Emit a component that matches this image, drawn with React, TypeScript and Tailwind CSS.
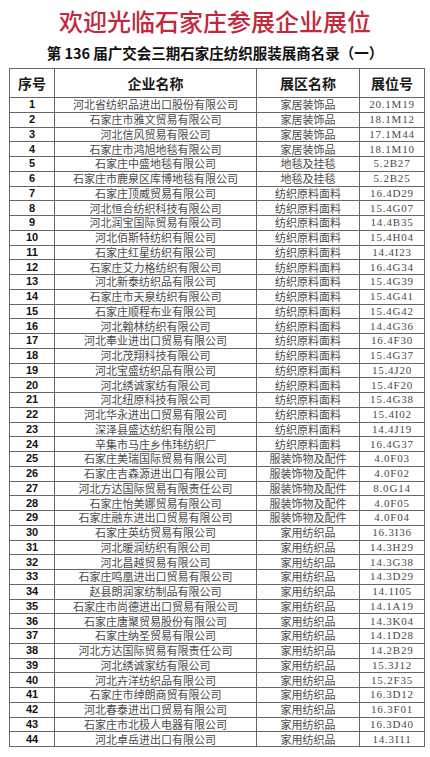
import React from "react";

interface Exhibitor {
  name: string;
  hall: string;
  booth: string;
}

const rows: Exhibitor[] = [
  { name: "河北省纺织品进出口股份有限公司", hall: "家居装饰品", booth: "20.1M19" },
  { name: "石家庄市雅文贸易有限公司", hall: "家居装饰品", booth: "18.1M12" },
  { name: "河北信风贸易有限公司", hall: "家居装饰品", booth: "17.1M44" },
  { name: "石家庄市鸿旭地毯有限公司", hall: "家居装饰品", booth: "18.1M10" },
  { name: "石家庄中盛地毯有限公司", hall: "地毯及挂毯", booth: "5.2B27" },
  { name: "石家庄市鹿泉区库博地毯有限公司", hall: "地毯及挂毯", booth: "5.2B25" },
  { name: "石家庄顶威贸易有限公司", hall: "纺织原料面料", booth: "16.4D29" },
  { name: "河北恒合纺织科技有限公司", hall: "纺织原料面料", booth: "15.4G07" },
  { name: "河北润宝国际贸易有限公司", hall: "纺织原料面料", booth: "14.4B35" },
  { name: "河北佰斯特纺织有限公司", hall: "纺织原料面料", booth: "15.4H04" },
  { name: "石家庄红星纺织有限公司", hall: "纺织原料面料", booth: "14.4I23" },
  { name: "石家庄艾力格纺织有限公司", hall: "纺织原料面料", booth: "16.4G34" },
  { name: "河北新泰纺织品有限公司", hall: "纺织原料面料", booth: "15.4G39" },
  { name: "石家庄市天泉纺织有限公司", hall: "纺织原料面料", booth: "15.4G41" },
  { name: "石家庄顺程布业有限公司", hall: "纺织原料面料", booth: "15.4G42" },
  { name: "河北翰林纺织有限公司", hall: "纺织原料面料", booth: "14.4G36" },
  { name: "河北奉业进出口贸易有限公司", hall: "纺织原料面料", booth: "16.4F30" },
  { name: "河北茂翔科技有限公司", hall: "纺织原料面料", booth: "15.4G37" },
  { name: "河北宝盛纺织品有限公司", hall: "纺织原料面料", booth: "15.4J20" },
  { name: "河北绣诚家纺有限公司", hall: "纺织原料面料", booth: "15.4F20" },
  { name: "河北纽原科技有限公司", hall: "纺织原料面料", booth: "15.4G38" },
  { name: "河北华永进出口贸易有限公司", hall: "纺织原料面料", booth: "15.4I02" },
  { name: "深泽县盛达纺织有限公司", hall: "纺织原料面料", booth: "14.4J19" },
  { name: "辛集市马庄乡伟玮纺织厂", hall: "纺织原料面料", booth: "16.4G37" },
  { name: "石家庄美瑞国际贸易有限公司", hall: "服装饰物及配件", booth: "4.0F03" },
  { name: "石家庄吉森源进出口有限公司", hall: "服装饰物及配件", booth: "4.0F02" },
  { name: "河北方达国际贸易有限责任公司", hall: "服装饰物及配件", booth: "8.0G14" },
  { name: "石家庄怡美娜贸易有限公司", hall: "服装饰物及配件", booth: "4.0F05" },
  { name: "石家庄融东进出口贸易有限公司", hall: "服装饰物及配件", booth: "4.0F04" },
  { name: "石家庄英纺贸易有限公司", hall: "家用纺织品", booth: "16.3I36" },
  { name: "河北暖润纺织有限公司", hall: "家用纺织品", booth: "14.3H29" },
  { name: "河北昌越贸易有限公司", hall: "家用纺织品", booth: "14.3G38" },
  { name: "石家庄鸣凰进出口贸易有限公司", hall: "家用纺织品", booth: "14.3D29" },
  { name: "赵县朗润家纺制品有限公司", hall: "家用纺织品", booth: "14.1I05" },
  { name: "石家庄市尚德进出口贸易有限公司", hall: "家用纺织品", booth: "14.1A19" },
  { name: "石家庄唐聚贸易股份有限公司", hall: "家用纺织品", booth: "14.3K04" },
  { name: "石家庄纳圣贸易有限公司", hall: "家用纺织品", booth: "14.1D28" },
  { name: "河北方达国际贸易有限责任公司", hall: "家用纺织品", booth: "14.2B29" },
  { name: "河北绣诚家纺有限公司", hall: "家用纺织品", booth: "15.3J12" },
  { name: "河北卉洋纺织品有限公司", hall: "家用纺织品", booth: "15.2F35" },
  { name: "石家庄市绰朗商贸有限公司", hall: "家用纺织品", booth: "16.3D12" },
  { name: "河北春泰进出口贸易有限公司", hall: "家用纺织品", booth: "16.3F01" },
  { name: "石家庄市北极人电器有限公司", hall: "家用纺织品", booth: "16.3D40" },
  { name: "河北卓岳进出口有限公司", hall: "家用纺织品", booth: "14.3I11" },
];

const cjk = "font-['Noto_Sans_CJK_SC',sans-serif]";

const App = () => {
  return (
    <div className="w-[430px] h-[757px] bg-white overflow-hidden">
      <h1
        className={`${cjk} pt-[5px] h-[38px] text-center text-[24px] leading-[32px] font-medium text-[#c3283c]`}
      >
        欢迎光临石家庄参展企业展位
      </h1>
      <h2
        className={`${cjk} h-[30px] text-center text-[14.5px] leading-[30px] font-bold text-[#111]`}
      >
        第 136 届广交会三期石家庄纺织服装展商名录（一）
      </h2>
      <div className="px-[9px]">
        <table className="w-[415px] border-collapse table-fixed border-[1.5px] border-[#777]">
          <colgroup>
            <col className="w-[45px]" />
            <col className="w-[202px]" />
            <col className="w-[103px]" />
            <col className="w-[65px]" />
          </colgroup>
          <thead>
            <tr className="h-[29px]">
              {["序号", "企业名称", "展区名称", "展位号"].map((h) => (
                <th
                  key={h}
                  className={`${cjk} border border-[#666] p-0 text-[14px] leading-none font-bold text-[#1a1a1a]`}
                >
                  {h}
                </th>
              ))}
            </tr>
          </thead>
          <tbody>
            {rows.map((r, i) => (
              <tr key={i} className="h-[14.75px]">
                <td className="border border-[#666] p-0 text-center text-[11px] leading-none font-bold text-[#111] font-['Liberation_Sans',sans-serif]">
                  {i + 1}
                </td>
                <td
                  className={`${cjk} border border-[#666] p-0 text-center text-[11px] leading-none text-[#4a4a4a]`}
                >
                  {r.name}
                </td>
                <td
                  className={`${cjk} border border-[#666] p-0 text-center text-[11px] leading-none text-[#4a4a4a]`}
                >
                  {r.hall}
                </td>
                <td className="border border-[#666] p-0 text-center text-[11px] leading-none text-[#4a4a4a] font-['Liberation_Serif',serif] tracking-[0.8px]">
                  {r.booth}
                </td>
              </tr>
            ))}
          </tbody>
        </table>
      </div>
    </div>
  );
};

export default App;
